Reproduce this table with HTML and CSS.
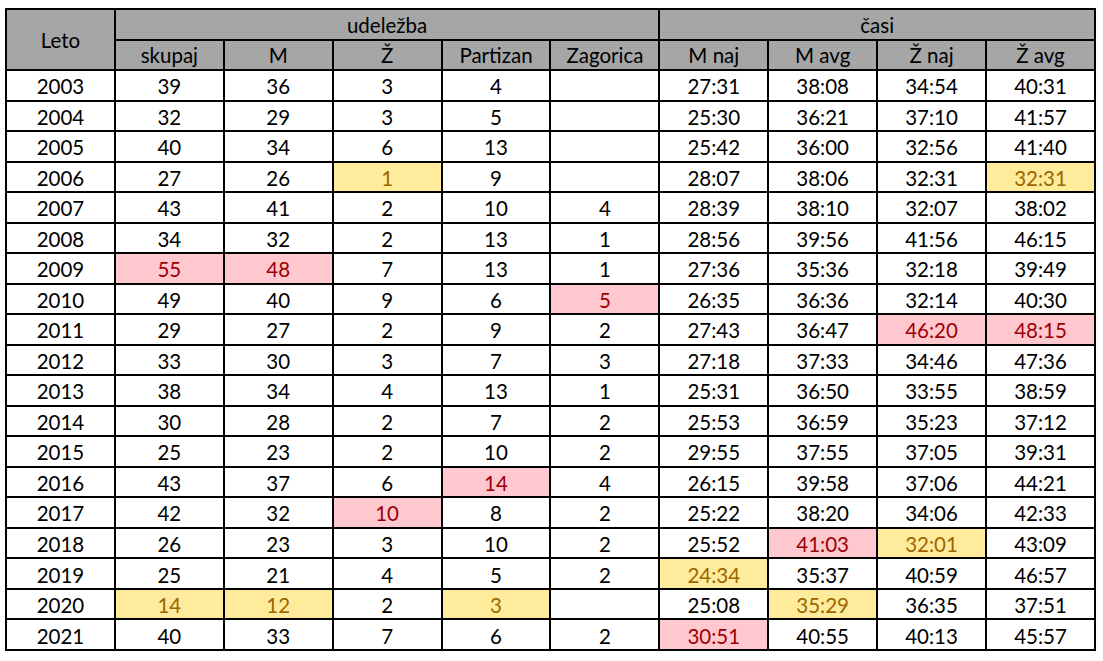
FILE: index.html
```html
<!DOCTYPE html>
<html lang="sl">
<head>
<meta charset="utf-8">
<title>Udeležba in časi</title>
<link rel="stylesheet" href="styles.css">
</head>
<body>
<table class="stats">
  <colgroup>
    <col class="c"><col class="c"><col class="c"><col class="c"><col class="c">
    <col class="c"><col class="c"><col class="c"><col class="c"><col class="c">
  </colgroup>
  <thead>
    <tr class="h1">
      <th rowspan="2" class="leto">Leto</th>
      <th colspan="5">udeležba</th>
      <th colspan="4">časi</th>
    </tr>
    <tr class="h2">
      <th>skupaj</th><th>M</th><th>Ž</th><th>Partizan</th><th>Zagorica</th>
      <th>M naj</th><th>M avg</th><th>Ž naj</th><th>Ž avg</th>
    </tr>
  </thead>
  <tbody>
    <tr><td>2003</td><td>39</td><td>36</td><td>3</td><td>4</td><td></td><td>27:31</td><td>38:08</td><td>34:54</td><td>40:31</td></tr>
    <tr><td>2004</td><td>32</td><td>29</td><td>3</td><td>5</td><td></td><td>25:30</td><td>36:21</td><td>37:10</td><td>41:57</td></tr>
    <tr><td>2005</td><td>40</td><td>34</td><td>6</td><td>13</td><td></td><td>25:42</td><td>36:00</td><td>32:56</td><td>41:40</td></tr>
    <tr><td>2006</td><td>27</td><td>26</td><td class="good">1</td><td>9</td><td></td><td>28:07</td><td>38:06</td><td>32:31</td><td class="good">32:31</td></tr>
    <tr><td>2007</td><td>43</td><td>41</td><td>2</td><td>10</td><td>4</td><td>28:39</td><td>38:10</td><td>32:07</td><td>38:02</td></tr>
    <tr><td>2008</td><td>34</td><td>32</td><td>2</td><td>13</td><td>1</td><td>28:56</td><td>39:56</td><td>41:56</td><td>46:15</td></tr>
    <tr><td>2009</td><td class="bad">55</td><td class="bad">48</td><td>7</td><td>13</td><td>1</td><td>27:36</td><td>35:36</td><td>32:18</td><td>39:49</td></tr>
    <tr><td>2010</td><td>49</td><td>40</td><td>9</td><td>6</td><td class="bad">5</td><td>26:35</td><td>36:36</td><td>32:14</td><td>40:30</td></tr>
    <tr><td>2011</td><td>29</td><td>27</td><td>2</td><td>9</td><td>2</td><td>27:43</td><td>36:47</td><td class="bad">46:20</td><td class="bad">48:15</td></tr>
    <tr><td>2012</td><td>33</td><td>30</td><td>3</td><td>7</td><td>3</td><td>27:18</td><td>37:33</td><td>34:46</td><td>47:36</td></tr>
    <tr><td>2013</td><td>38</td><td>34</td><td>4</td><td>13</td><td>1</td><td>25:31</td><td>36:50</td><td>33:55</td><td>38:59</td></tr>
    <tr><td>2014</td><td>30</td><td>28</td><td>2</td><td>7</td><td>2</td><td>25:53</td><td>36:59</td><td>35:23</td><td>37:12</td></tr>
    <tr><td>2015</td><td>25</td><td>23</td><td>2</td><td>10</td><td>2</td><td>29:55</td><td>37:55</td><td>37:05</td><td>39:31</td></tr>
    <tr><td>2016</td><td>43</td><td>37</td><td>6</td><td class="bad">14</td><td>4</td><td>26:15</td><td>39:58</td><td>37:06</td><td>44:21</td></tr>
    <tr><td>2017</td><td>42</td><td>32</td><td class="bad">10</td><td>8</td><td>2</td><td>25:22</td><td>38:20</td><td>34:06</td><td>42:33</td></tr>
    <tr><td>2018</td><td>26</td><td>23</td><td>3</td><td>10</td><td>2</td><td>25:52</td><td class="bad">41:03</td><td class="good">32:01</td><td>43:09</td></tr>
    <tr><td>2019</td><td>25</td><td>21</td><td>4</td><td>5</td><td>2</td><td class="good">24:34</td><td>35:37</td><td>40:59</td><td>46:57</td></tr>
    <tr><td>2020</td><td class="good">14</td><td class="good">12</td><td>2</td><td class="good">3</td><td></td><td>25:08</td><td class="good">35:29</td><td>36:35</td><td>37:51</td></tr>
    <tr><td>2021</td><td>40</td><td>33</td><td>7</td><td>6</td><td>2</td><td class="bad">30:51</td><td>40:55</td><td>40:13</td><td>45:57</td></tr>
  </tbody>
</table>
</body>
</html>
```
FILE: styles.css
```css
html, body {
  margin: 0;
  padding: 0;
  background: #ffffff;
}

body {
  padding: 8px 0 0 5px;
  font-family: Lato, "Liberation Sans", sans-serif;
  font-size: 20.5px;
  color: #000000;
}

.stats {
  border-collapse: separate;
  border-spacing: 0;
  table-layout: fixed;
  width: 1091px;
  border-top: 2px solid #000;
  border-left: 2px solid #000;
}

.stats col.c {
  width: 108.9px;
}

.stats th,
.stats td {
  border-right: 2px solid #000;
  border-bottom: 2px solid #000;
  text-align: center;
  white-space: nowrap;
  overflow: hidden;
  padding: 0;
  font-weight: normal;
}

.stats th {
  background: #a6a6a6;
  vertical-align: middle;
  line-height: 22px;
}

.h1 th {
  height: 29px;
}

.h2 th {
  height: 28px;
}

.stats td {
  height: 26.53px;
  padding-top: 2px;
  line-height: 22px;
  vertical-align: middle;
  background: #ffffff;
}

.stats td.good {
  background: #ffeb9c;
  color: #9c6500;
}

.stats td.bad {
  background: #ffc7ce;
  color: #9c0006;
}
```
